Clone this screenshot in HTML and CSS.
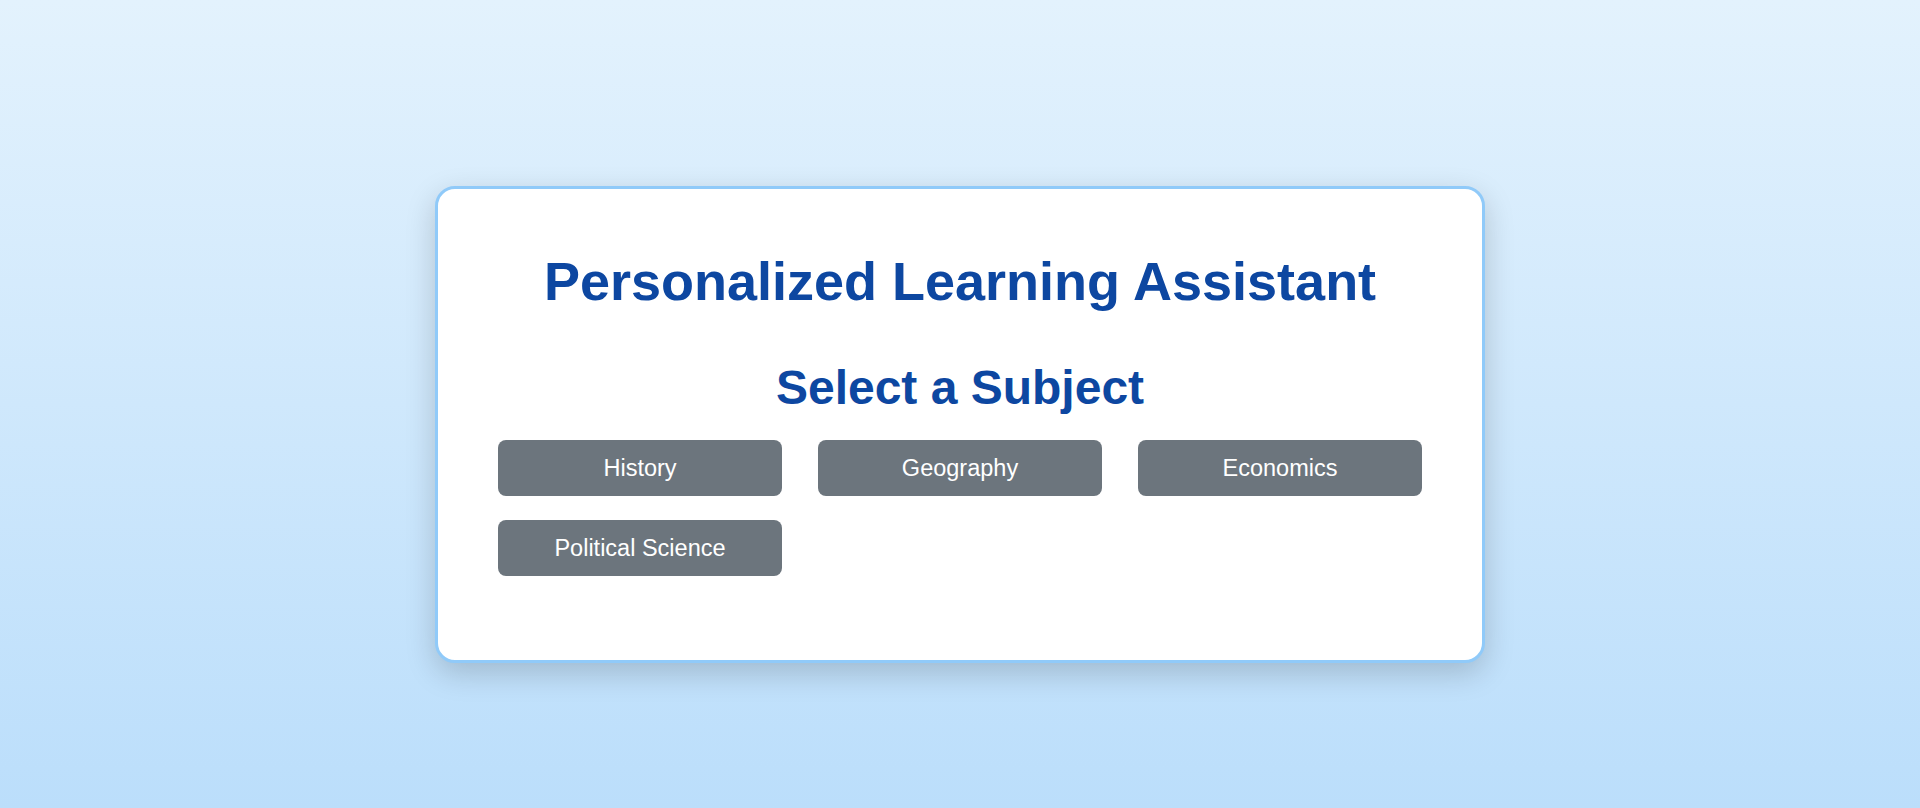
FILE: index.html
```html
<!DOCTYPE html>
<html lang="en">
<head>
<meta charset="utf-8">
<title>Personalized Learning Assistant</title>
<link rel="stylesheet" href="styles.css">
</head>
<body>
<main class="page">
  <section class="card">
    <h1 class="title">Personalized Learning Assistant</h1>
    <h2 class="subtitle">Select a Subject</h2>
    <div class="subjects">
      <button class="subject-btn">History</button>
      <button class="subject-btn">Geography</button>
      <button class="subject-btn">Economics</button>
      <button class="subject-btn">Political Science</button>
    </div>
  </section>
</main>
</body>
</html>
```

FILE: styles.css
```css
* { box-sizing: border-box; }

html, body {
  margin: 0;
  padding: 0;
  height: 100%;
}

body {
  font-family: "Liberation Sans", Arial, sans-serif;
  background: linear-gradient(to bottom, #e3f2fd, #bbdefb);
  min-height: 808px;
}

.page {
  min-height: 808px;
  display: flex;
  align-items: flex-start;
  justify-content: center;
  padding-top: 186px;
}

.card {
  width: 1050px;
  background: #ffffff;
  border: 3px solid #90caf9;
  border-radius: 20px;
  box-shadow: 0 10px 30px rgba(0, 0, 0, 0.18);
  padding: 61px 60px 61px;
}

.title {
  margin: 0 0 48px;
  text-align: center;
  color: #0d47a1;
  font-size: 54px;
  font-weight: bold;
}

.subtitle {
  margin: 0 0 25px;
  text-align: center;
  color: #0d47a1;
  font-size: 48px;
  font-weight: bold;
}

.subjects {
  display: grid;
  grid-template-columns: repeat(3, 284px);
  column-gap: 36px;
  row-gap: 24px;
  margin-bottom: 23px;
}

.subject-btn {
  height: 56px;
  border: none;
  border-radius: 8px;
  background: #6c757d;
  color: #ffffff;
  font-family: "Liberation Sans", Arial, sans-serif;
  font-size: 23.5px;
  padding-top: 2px;
  cursor: pointer;
}
```
